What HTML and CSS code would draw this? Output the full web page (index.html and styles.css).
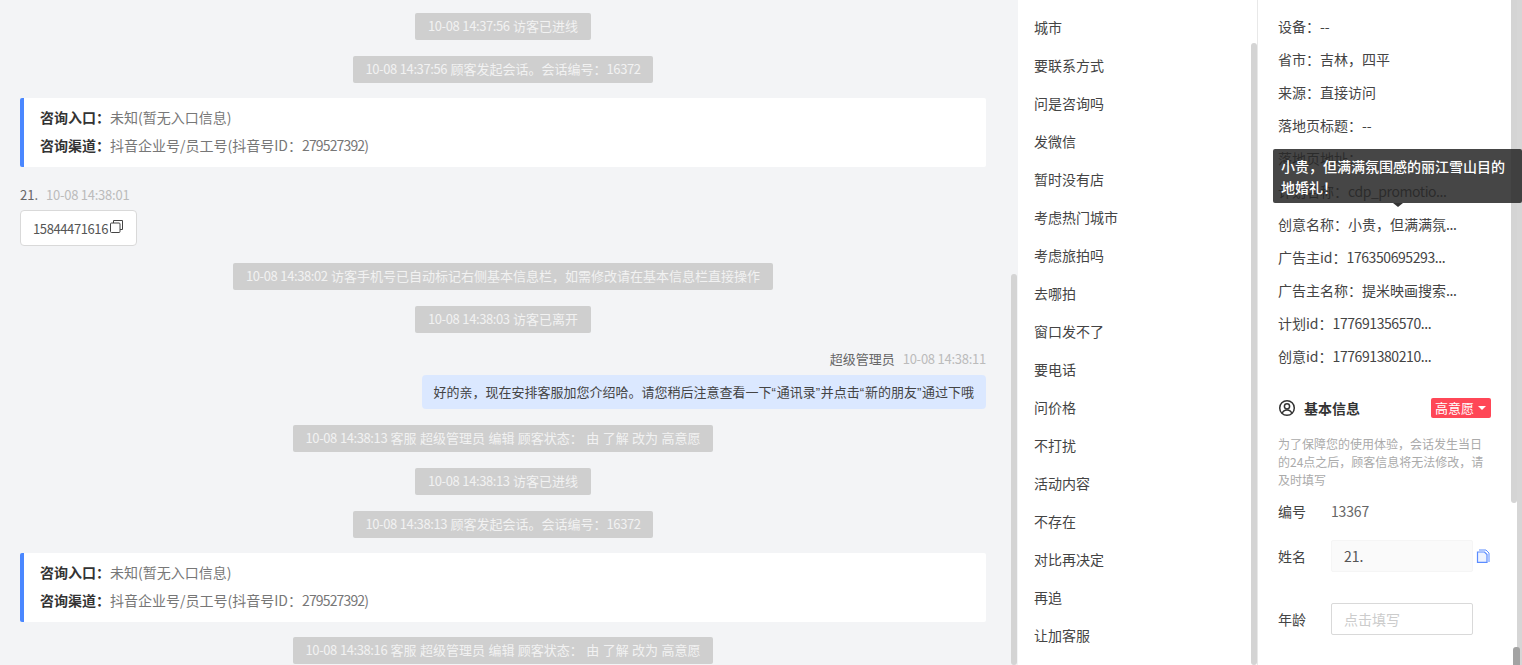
FILE: index.html
```html
<!DOCTYPE html>
<html lang="zh-CN">
<head>
<meta charset="utf-8">
<title>会话详情</title>
<link rel="stylesheet" href="styles.css">
</head>
<body>
<div class="app">
  <section class="chat">
    <div class="sys"><span class="n">10-08 14:37:56</span> 访客已进线</div>
    <div class="sys"><span class="n">10-08 14:37:56</span> 顾客发起会话。会话编号：<span class="n">16372</span></div>
    <div class="card">
      <p><b>咨询入口：</b>未知(暂无入口信息)</p>
      <p><b>咨询渠道：</b>抖音企业号/员工号(抖音号ID：<span class="m">279527392)</span></p>
    </div>
    <div class="meta"><span class="who">21.</span><span class="time">10-08 14:38:01</span></div>
    <div class="phone"><span class="n">15844471616</span><svg class="dup" viewBox="0 0 13 13" width="13" height="13"><path d="M3.500 3V.5h9v9H10" fill="none" stroke="#444" stroke-width="1"/><rect x=".5" y="3" width="9.500" height="9.500" rx="1" fill="none" stroke="#444" stroke-width="1"/></svg></div>
    <div class="sys sys-a"><span class="n">10-08 14:38:02</span> 访客手机号已自动标记右侧基本信息栏，如需修改请在基本信息栏直接操作</div>
    <div class="sys"><span class="n">10-08 14:38:03</span> 访客已离开</div>
    <div class="meta meta-right"><span class="who">超级管理员</span><span class="time">10-08 14:38:11</span></div>
    <div class="bubble">好的亲，现在安排客服加您介绍哈。请您稍后注意查看一下<span class="q">“</span>通讯录<span class="q">”</span>并点击<span class="q">“</span>新的朋友<span class="q">”</span>通过下哦</div>
    <div class="sys"><span class="n">10-08 14:38:13</span> 客服 超级管理员 编辑 顾客状态： 由 了解 改为 高意愿</div>
    <div class="sys"><span class="n">10-08 14:38:13</span> 访客已进线</div>
    <div class="sys"><span class="n">10-08 14:38:13</span> 顾客发起会话。会话编号：<span class="n">16372</span></div>
    <div class="card">
      <p><b>咨询入口：</b>未知(暂无入口信息)</p>
      <p><b>咨询渠道：</b>抖音企业号/员工号(抖音号ID：<span class="m">279527392)</span></p>
    </div>
    <div class="sys"><span class="n">10-08 14:38:16</span> 客服 超级管理员 编辑 顾客状态： 由 了解 改为 高意愿</div>
  </section>
  <div class="track track-chat"><div class="thumb thumb-chat"></div></div>

  <section class="tags">
    <ul class="tag-list">
      <li>城市</li><li>要联系方式</li><li>问是咨询吗</li><li>发微信</li><li>暂时没有店</li><li>考虑热门城市</li><li>考虑旅拍吗</li><li>去哪拍</li><li>窗口发不了</li><li>要电话</li><li>问价格</li><li>不打扰</li><li>活动内容</li><li>不存在</li><li>对比再决定</li><li>再追</li><li>让加客服</li>
    </ul>
  </section>
  <div class="track track-tags"><div class="thumb thumb-tags"></div></div>

  <section class="info">
    <ul class="attr-list">
      <li>设备：--</li><li>省市：吉林，四平</li><li>来源：直接访问</li><li>落地页标题：--</li><li>落地页地址：</li><li>计划名称：<span class="m">cdp_promotio...</span></li><li>创意名称：小贵，但满满氛<span class="m">...</span></li><li>广告主id：<span class="m">176350695293...</span></li><li>广告主名称：提米映画搜索<span class="m">...</span></li><li>计划id：<span class="m">177691356570...</span></li><li>创意id：<span class="m">177691380210...</span></li>
    </ul>
    <div class="head">
      <svg class="head-icon" viewBox="0 0 18 18" width="18" height="18"><circle cx="9" cy="9" r="7.300" fill="none" stroke="#333" stroke-width="1.500"/><circle cx="9" cy="7.300" r="2.600" fill="none" stroke="#333" stroke-width="1.500"/><path d="M4.200 14.200c.8-2.300 2.600-3.300 4.800-3.300s4 1 4.800 3.300" fill="none" stroke="#333" stroke-width="1.500"/></svg>
      <strong class="head-title">基本信息</strong>
      <span class="level">高意愿<i class="caret"></i></span>
    </div>
    <p class="notice">为了保障您的使用体验，会话发生当日的24点之后，顾客信息将无法修改，请及时填写</p>
    <div class="field field-no"><span class="label">编号</span><span class="value">13367</span></div>
    <div class="field field-name">
      <span class="label">姓名</span>
      <div class="filled">21.</div>
      <svg class="file" viewBox="0 0 14 14" width="14" height="14"><path d="M3 1h7l3 3v9" fill="none" stroke="#5b8cff" stroke-width="1"/><path d="M1.500 3h7l2.500 2.500v7.900h-9.500z" fill="#eef3ff" stroke="#5b8cff" stroke-width="1.200"/></svg>
    </div>
    <div class="field field-age">
      <span class="label">年龄</span>
      <div class="empty">点击填写</div>
    </div>
  </section>
  <div class="track track-info"><div class="thumb thumb-info"></div></div>
  <div class="track track-outer"></div>
</div>
<div class="outer-thumb"></div>
<div class="tip">小贵，但满满氛围感的丽江雪山目的地婚礼！<i class="tip-arrow"></i></div>
</body>
</html>
```

FILE: styles.css
```css
* { box-sizing: border-box; }
html, body { margin: 0; height: 665px; overflow: hidden; background: #fff; }
body {
  font-family: "Noto Sans CJK SC", "Noto Sans", sans-serif;
  font-size: 13px;
  color: #333;
  position: relative;
}
p, ul { margin: 0; padding: 0; list-style: none; }

/* narrower Latin runs inside CJK text */
.n { letter-spacing: -0.4px; }
.m { letter-spacing: -0.42px; }
.card .m { letter-spacing: -0.85px; }
.q { font-family: "Liberation Sans", sans-serif; letter-spacing: 0.75px; }

.app { display: flex; height: 665px; overflow: hidden; }

/* chat */
.chat {
  width: 1011px;
  flex: none;
  background: #f3f4f6;
  padding: 13px 25px 0 20px;
  display: flex;
  flex-direction: column;
  align-items: center;
  overflow: hidden;
}
.sys {
  height: 27px;
  line-height: 26px;
  padding: 0 12.500px;
  margin-bottom: 16px;
  background: #cfcfcf;
  color: #f2f2f2;
  border-radius: 2px;
  font-size: 13px;
  word-spacing: 0.5px;
  white-space: nowrap;
  flex: none;
}
.sys-a { margin-top: 17px; }
.card {
  align-self: stretch;
  height: 69px;
  flex: none;
  margin-top: -1px;
  background: #fff;
  border-left: 4px solid #4a87ff;
  border-radius: 2px;
  padding: 5px 0 0 16px;
  color: #777;
  font-size: 14px;
  line-height: 28px;
  margin-bottom: 15px;
}
.card b { color: #333; font-weight: 700; }
.meta {
  align-self: flex-start;
  height: 20px;
  line-height: 20px;
  margin-top: 3px;
  color: #666;
  font-size: 13px;
  flex: none;
}
.time { color: #bbb; margin-left: 8px; letter-spacing: -0.25px; }
.meta-right { align-self: flex-end; margin-top: 0; margin-bottom: 6px; }
.phone {
  align-self: flex-start;
  flex: none;
  height: 36px;
  width: 117px;
  margin-top: 5px;
  background: #fff;
  border: 1px solid #d9d9d9;
  border-radius: 4px;
  padding-left: 12px;
  display: flex;
  align-items: center;
  color: #555;
}
.dup { flex: none; margin: 0 0 3px 2px; }
.bubble {
  align-self: flex-end;
  flex: none;
  height: 34px;
  line-height: 33px;
  padding: 0 12px;
  margin-bottom: 16px;
  background: #dbe8ff;
  color: #444;
  border-radius: 4px;
  white-space: nowrap;
}

/* scroll tracks */
.track { flex: none; width: 6px; height: 665px; background: #d6d6d6; }
.track-chat { background: #f3f4f6; width: 7px; padding-right: 1px; }
.track-tags { background: #fff; width: 7px; padding-right: 0; border-right: 1px solid #e8e8e8; }
.track-info { background: #fff; }
.track-outer { width: 5px; }
.thumb { width: 6px; background: #d4d4d4; border-radius: 3px; }
.thumb-chat { margin-top: 274px; height: 391px; }
.thumb-tags { margin-top: 43px; height: 622px; }
.thumb-info { height: 503px; border-radius: 0 0 3px 3px; }
.outer-thumb {
  position: absolute;
  left: 1513px;
  top: 647px;
  width: 7px;
  height: 18px;
  background: #a3a3a3;
  border-radius: 3px 3px 0 0;
}

/* tags */
.tags {
  width: 233px;
  flex: none;
  background: #fff;
  padding: 8px 0 0 16px;
  overflow: hidden;
}
.tag-list li { height: 38px; line-height: 38px; font-size: 14px; color: #444; }

/* info */
.info {
  width: 253px;
  flex: none;
  background: #fff;
  padding: 10px 0 0 20px;
  overflow: hidden;
}
.attr-list li { height: 33px; line-height: 33px; font-size: 14px; color: #444; white-space: nowrap; }
.head { display: flex; align-items: center; height: 20px; margin-top: 25px; }
.head-icon { flex: none; }
.head-title { margin-left: 8px; font-size: 14px; font-weight: 700; }
.level {
  margin-left: 71px;
  width: 60px;
  height: 20px;
  line-height: 20px;
  background: #ff4757;
  color: #fff;
  border-radius: 2px;
  padding-left: 4px;
  display: flex;
  align-items: center;
  font-size: 13px;
}
.caret {
  margin-left: 4px;
  border: 4px solid transparent;
  border-top: 4px solid #fff;
  border-bottom: 0;
}
.notice {
  margin-top: 17px;
  width: 212px;
  font-size: 12px;
  line-height: 18px;
  color: #aaa;
}
.field { display: flex; align-items: center; font-size: 14px; }
.label { width: 53px; flex: none; color: #444; }
.value { color: #666; letter-spacing: -0.15px; }
.field-no { height: 20px; margin-top: 12px; }
.field-name { height: 32px; margin-top: 19px; }
.filled {
  width: 142px;
  height: 32px;
  line-height: 30px;
  background: #fafafa;
  border: 1px solid #f5f5f5;
  border-radius: 2px;
  padding-left: 12px;
  color: #555;
}
.file { margin-left: 3px; flex: none; }
.field-age { height: 32px; margin-top: 31px; }
.empty {
  width: 142px;
  height: 32px;
  line-height: 30px;
  border: 1px solid #d9d9d9;
  border-radius: 2px;
  padding-left: 12px;
  color: #ccc;
}

/* tooltip */
.tip {
  position: absolute;
  left: 1273px;
  top: 149px;
  width: 249px;
  height: 54px;
  padding: 7px 8px 0;
  background: rgba(40, 40, 40, 0.86);
  color: #fff;
  font-size: 14px;
  font-weight: 500;
  line-height: 21px;
  border-radius: 2px;
}
.tip-arrow {
  position: absolute;
  left: 120px;
  bottom: -4px;
  border: 5px solid transparent;
  border-top: 4px solid #333;
  border-bottom: 0;
}
```
